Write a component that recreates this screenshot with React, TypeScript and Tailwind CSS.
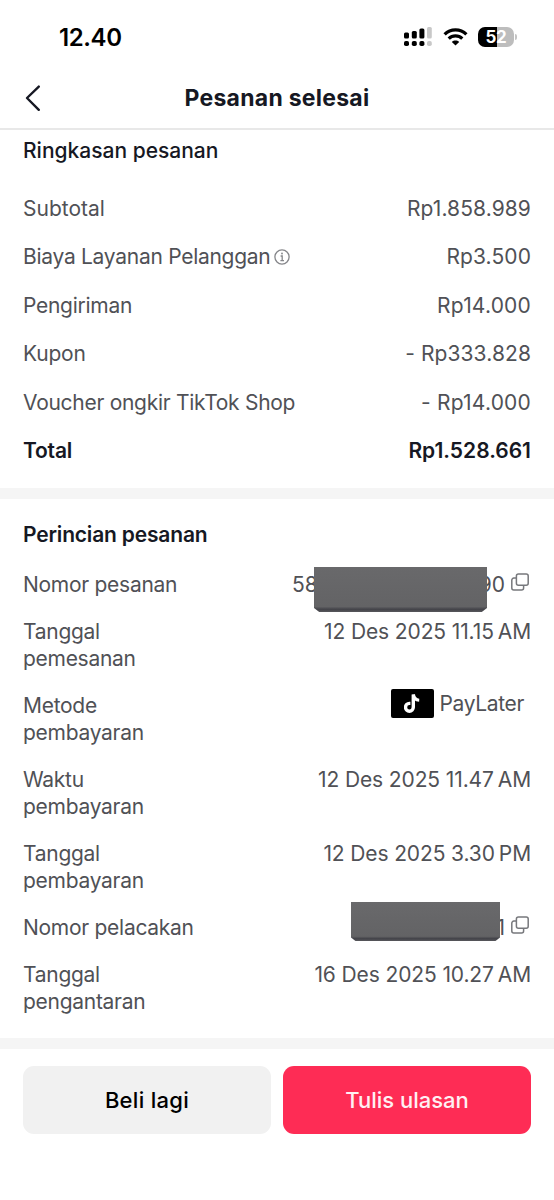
import {type FC, type ReactNode} from 'react';

type RowProps = {
    label: string;
    labelClass?: string;
    value: ReactNode;
    valueClass?: string;
};

const StatusIcons: FC = () => (
    <div className="flex items-center">
        <svg width="28" height="20" viewBox="0 0 28 20" fill="#000">
            <rect x="0" y="5.5" width="5" height="6" rx="1.5"/>
            <rect x="7.8" y="4" width="5" height="7.5" rx="1.5"/>
            <rect x="15.4" y="1.5" width="5" height="10" rx="1.5"/>
            <rect x="23" y="0" width="4.8" height="11.5" rx="1.5" fill="#c8c8c8"/>
            <rect x="0" y="14" width="5" height="5" rx="1.8"/>
            <rect x="7.8" y="14" width="5" height="5" rx="1.8"/>
            <rect x="15.4" y="14" width="5" height="5" rx="1.8"/>
            <rect x="23" y="14" width="4.8" height="5" rx="1.8" fill="#c8c8c8"/>
        </svg>
        <svg className="ml-[11px]" width="25" height="18" viewBox="0 0 25 18" fill="none" stroke="#000" strokeWidth="3.2">
            <path d="M1.6 6.4C7.6 .4 17.4 .4 23.4 6.4"/>
            <path d="M5.7 10.7C9.5 7 15.5 7 19.3 10.7"/>
            <path d="M12.5 17.6L8.8 14C10.9 12.1 14.1 12.1 16.2 14Z" fill="#000" stroke="none"/>
        </svg>
        <div className="ml-[10px] flex h-5 w-9 items-center justify-center rounded-[7px] bg-[linear-gradient(90deg,#000_52%,#bdbdbd_52%)]">
            <span className="text-[17px] font-bold leading-5 tracking-[-0.3px] text-white">52</span>
        </div>
        <span className="ml-px h-[6px] w-[2px] rounded-r-full bg-[#c4c4c4]"/>
    </div>
);

const InfoIcon: FC = () => (
    <svg className="mt-px" width="16" height="16" viewBox="0 0 16 16" fill="none" stroke="#85868a" strokeWidth="1.3">
        <circle cx="8" cy="8" r="7.1"/>
        <path d="M6.6 7H8.2V11.6M6.4 11.6H10"/>
        <circle cx="8" cy="4.5" r=".9" fill="#85868a" stroke="none"/>
    </svg>
);

const CopyIcon: FC = () => (
    <svg width="18" height="18" viewBox="0 0 18 18" fill="none" stroke="#77787c" strokeWidth="1.5">
        <rect x="5.4" y=".9" width="11.8" height="11.4" rx="2"/>
        <path d="M5.4 5.1H2.8a2 2 0 0 0-2 2v8a2 2 0 0 0 2 2h7.8a2 2 0 0 0 2-2v-2.8"/>
    </svg>
);

const TikTokBadge: FC = () => (
    <span className="flex h-[29px] w-[43px] items-center justify-center rounded-[2px] bg-black">
        <svg width="16" height="20" viewBox="0 0 16 20" fill="none" stroke="#fff" strokeWidth="3.4">
            <path d="M9.3 .5V13.3A3.9 3.9 0 1 1 5.4 9.4H6.4"/>
            <path d="M9.5 .5C9.8 4 12 6 15.2 6.2" strokeWidth="3"/>
        </svg>
    </span>
);

const Row: FC<RowProps> = ({label, labelClass = 'tracking-[-0.28px]', value, valueClass = 'tracking-[0.1px]'}) => (
    <div className="flex items-start justify-between">
        <span className={`w-[180px] ${labelClass}`}>{label}</span>
        <span className={`whitespace-nowrap ${valueClass}`}>{value}</span>
    </div>
);

const DateTime: FC<{time: string; period: string}> = ({time, period}) => (
    <span className="flex gap-[4px] tracking-[-0.12px]">
        <span>{time}</span>
        <span>{period}</span>
    </span>
);

const App: FC = () => {
    return (
        <div className="h-[1200px] w-[554px] overflow-hidden bg-white font-['Inter',sans-serif] text-[21px] leading-[27px] text-[#505156]">
            <div className="flex h-[68px] items-center justify-between pl-[59px] pr-[37px] pt-[6px] text-black">
                <span className="text-[24px] font-semibold tracking-[-0.4px]">12.40</span>
                <StatusIcons/>
            </div>
            <header className="flex h-[62px] items-center border-b-2 border-[#e8e8e8] px-6 text-[#161823]">
                <svg width="18" height="28" viewBox="0 0 18 28" fill="none" stroke="currentColor" strokeWidth="2.4" strokeLinecap="round" strokeLinejoin="round">
                    <path d="M14.8 2.6L3 14L14.8 25.8"/>
                </svg>
                <h1 className="mr-[18px] flex-1 text-center text-[23px] font-bold tracking-[0.25px]">Pesanan selesai</h1>
            </header>

            <section className="h-[358px] px-[23px] pt-[7px]">
                <h2 className="mb-[31px] font-medium text-[#161823]">Ringkasan pesanan</h2>
                <div className="flex flex-col gap-[21.4px] whitespace-nowrap">
                    <Row label="Subtotal" labelClass="" value="Rp1.858.989"/>
                    <div className="flex items-center justify-between">
                        <span className="flex items-center gap-[4px]">
                            <span className="tracking-[-0.28px]">Biaya Layanan Pelanggan</span>
                            <InfoIcon/>
                        </span>
                        <span className="tracking-[0.1px]">Rp3.500</span>
                    </div>
                    <Row label="Pengiriman" value="Rp14.000" valueClass="tracking-[0.2px]"/>
                    <Row label="Kupon" labelClass="tracking-[-0.2px]" value="- Rp333.828"/>
                    <Row label="Voucher ongkir TikTok Shop" value="- Rp14.000" valueClass="tracking-[0.2px]"/>
                    <div className="font-semibold text-[#161823]">
                        <Row label="Total" labelClass="tracking-[-0.2px]" value="Rp1.528.661" valueClass=""/>
                    </div>
                </div>
            </section>

            <div className="h-[11px] bg-[#f5f5f5]"/>

            <section className="h-[539px] px-[23px] pt-[22px]">
                <h2 className="mb-[23px] font-semibold tracking-[-0.18px] text-[#161823]">Perincian pesanan</h2>
                <div className="flex flex-col gap-[20px]">
                    <div className="flex items-center justify-between">
                        <span className="tracking-[-0.28px]">Nomor pesanan</span>
                        <div className="relative flex h-[27px] w-[239px] items-center justify-between">
                            <span>58</span>
                            <span className="ml-auto mr-[6px]">90</span>
                            <span className="mb-[5px] mr-[2px]"><CopyIcon/></span>
                            <span className="absolute left-[22px] top-[-4px] h-[45px] w-[173px] bg-[linear-gradient(#69696b,#636365_88%,#434349_94%,#58585c)] [clip-path:polygon(0_0,100%_0,100%_91%,97%_100%,3%_100%,0_91%)]"/>
                        </div>
                    </div>
                    <Row label="Tanggal pemesanan" value={<DateTime time="12 Des 2025 11.15" period="AM"/>}/>
                    <div className="flex items-start justify-between">
                        <span className="w-[180px] tracking-[-0.28px]">Metode pembayaran</span>
                        <span className="mr-[7px] mt-[-3px] flex h-[29px] items-center gap-[6px]">
                            <TikTokBadge/>
                            <span className="tracking-[-0.35px]">PayLater</span>
                        </span>
                    </div>
                    <Row label="Waktu pembayaran" value={<DateTime time="12 Des 2025 11.47" period="AM"/>}/>
                    <Row label="Tanggal pembayaran" value={<DateTime time="12 Des 2025 3.30" period="PM"/>}/>
                    <div className="flex items-center justify-between">
                        <span className="tracking-[-0.28px]">Nomor pelacakan</span>
                        <div className="relative flex h-[27px] w-[181px] items-center justify-end">
                            <span className="mr-[6px]">1</span>
                            <span className="mb-[5px] mr-[2px]"><CopyIcon/></span>
                            <span className="absolute left-[1px] top-[-12px] h-[39px] w-[149px] bg-[linear-gradient(#69696b,#636365_88%,#434349_94%,#58585c)] [clip-path:polygon(0_0,100%_0,100%_91%,97%_100%,3%_100%,0_91%)]"/>
                        </div>
                    </div>
                    <Row label="Tanggal pengantaran" value={<DateTime time="16 Des 2025 10.27" period="AM"/>}/>
                </div>
            </section>

            <div className="h-[11px] bg-[#f5f5f5]"/>

            <footer className="grid grid-cols-2 gap-3 px-[23px] pt-[17px] text-[22px] font-medium">
                <button className="h-[68px] rounded-[11px] bg-[#f1f1f1] tracking-[0.3px] text-black">Beli lagi</button>
                <button className="h-[68px] rounded-[11px] bg-[#fe2c55] text-[#fff0f3]">Tulis ulasan</button>
            </footer>
        </div>
    );
};

export default App;
